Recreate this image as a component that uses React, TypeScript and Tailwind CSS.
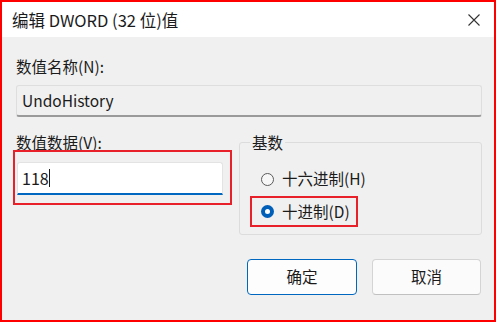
const font = { fontFamily: '"Noto Sans CJK SC", "Noto Sans", sans-serif' };

function Radio({ checked }: { checked?: boolean }) {
  if (checked) {
    return (
      <span className="w-[13px] h-[13px] rounded-full bg-[#005fb8] flex items-center justify-center shrink-0">
        <span className="w-[5px] h-[5px] rounded-full bg-white" />
      </span>
    );
  }
  return <span className="w-[13px] h-[13px] rounded-full border border-[#5a5a5a] bg-[#f7f7f7] shrink-0" />;
}

export default function App() {
  return (
    <div
      className="w-[496px] h-[322px] border-2 border-[#ff0000] bg-[#f0f0f0] flex flex-col text-[#1b1b1b]"
      style={font}
    >
      {/* title bar */}
      <div className="h-[35px] bg-white flex items-center justify-between pl-[10px] pr-[14px] shrink-0">
        <span className="text-[16.5px] leading-[20px]">编辑 DWORD (32 位)值</span>
        <svg width="12" height="12" viewBox="0 0 12 12" className="text-[#333]">
          <path d="M0.5 0.5 L11.5 11.5 M11.5 0.5 L0.5 11.5" stroke="currentColor" strokeWidth="1.1" />
        </svg>
      </div>

      {/* body */}
      <div className="flex flex-col pl-[14px] pr-[12px]">
        <div className="mt-[19px] text-[15.5px] leading-[20px]">数值名称(N):</div>
        <div className="mt-[9px] h-[32px] border border-[#dedede] border-b-2 border-b-[#9a9a9a] rounded-[3px] bg-[#f0f0f0] flex items-center pl-[5px] text-[15.5px]">
          UndoHistory
        </div>

        <div className="flex mt-[17px]">
          {/* left column */}
          <div className="w-[216px] flex flex-col">
            <div className="text-[15.5px] leading-[16px]">数值数据(V):</div>
            <div className="-ml-[3px] w-[219px] h-[55px] border-2 border-[#e8202a] pl-[2px] pr-[7px] pt-[10px]">
              <div className="h-[33px] bg-white border border-[#e3e3e3] border-b-2 border-b-[#0067c0] rounded-t-[3px] flex items-center pl-[4px] text-[16px]">
                118<span className="w-px h-[18px] bg-[#1b1b1b]" />
              </div>
            </div>
          </div>

          {/* radix group */}
          <div className="relative ml-[7px] mt-[8px] flex-1 h-[93px] border border-[#dcdcdc] rounded-[3px] pl-[10px] pt-[26px]">
            <span className="absolute -top-[11px] left-[10px] px-[2px] bg-[#f0f0f0] text-[15.5px] leading-[20px]">
              基数
            </span>
            <div className="ml-[11px] h-[20px] flex items-center gap-[8px] text-[15.5px]">
              <Radio />
              <span>十六进制(H)</span>
            </div>
            <div className="mt-[7px] w-[108px] h-[31px] border-2 border-[#e8202a] pl-[9px] flex items-center gap-[8px] text-[15.5px]">
              <Radio checked />
              <span>十进制(D)</span>
            </div>
          </div>
        </div>

        {/* buttons */}
        <div className="flex justify-end gap-[15px] mt-[24px] pr-[1px]">
          <button className="w-[110px] h-[36px] rounded-[4px] border border-[#0067c0] bg-[#fdfdfd] text-[15.5px]">
            确定
          </button>
          <button className="w-[109px] h-[36px] rounded-[4px] border border-[#d4d4d4] border-b-[#c0c0c0] bg-[#fbfbfb] text-[15.5px]">
            取消
          </button>
        </div>
      </div>
    </div>
  );
}
